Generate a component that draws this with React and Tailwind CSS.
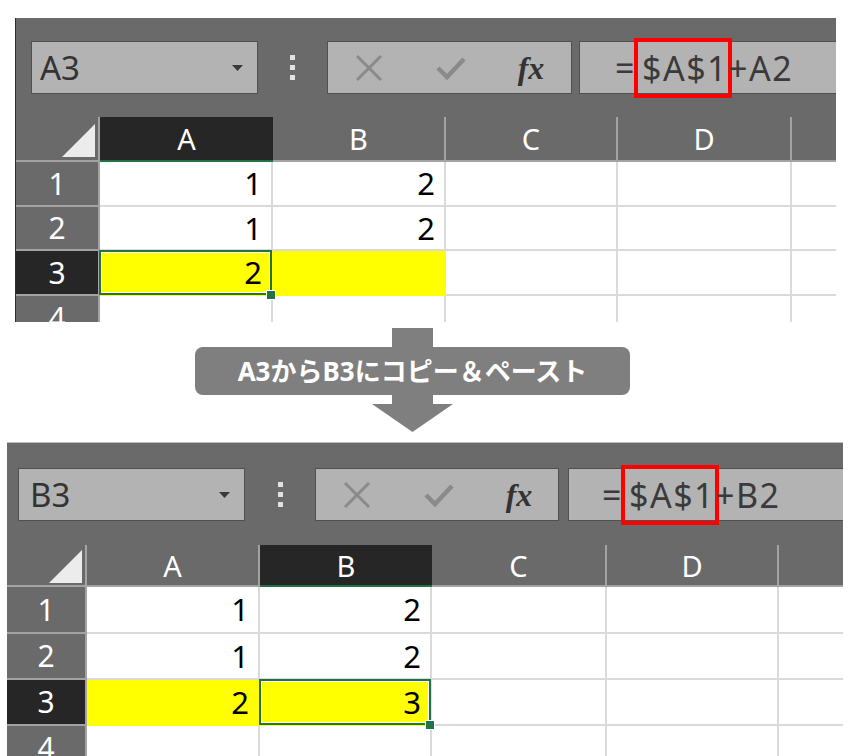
import React from "react";

const sheets = [
  {
    wrap: "ml-[15px] mt-[18px] w-[821px] h-[304px] border-l border-[#2e2e2e]",
    bar: "h-[99px] pt-[23px] pl-[15px]",
    nameBox: "w-[227px] pl-[8px]",
    dots: "w-[69px]",
    cancel: "w-[245px]",
    formulaBox: "ml-[7px] pl-[35px]",
    corner: "w-[84px]",
    tri: "pr-[3px] pb-[3px]",
    cols: ["w-[173px]", "w-[173px]", "w-[172px]", "w-[174px]"],
    headH: "h-[45px]",
    rowH: ["h-[45px]", "h-[44px]", "h-[45px]", "h-[45px]"],
    name: "A3",
    other: "A2",
    selCol: 0,
    data: [["1", "2"], ["1", "2"], ["2", ""]],
  },
  {
    wrap: "ml-[7px] mt-[10px] w-[836px] h-[314px] border-t border-[#bdbdbd]",
    bar: "h-[102px] pt-[25px] pl-[11px]",
    nameBox: "w-[227px] pl-[11px]",
    dots: "w-[70px]",
    cancel: "w-[244px]",
    formulaBox: "ml-[9px] pl-[33px]",
    corner: "w-[80px]",
    tri: "pr-[3px] pb-[2px]",
    cols: ["w-[173px]", "w-[172px]", "w-[175px]", "w-[172px]"],
    headH: "h-[42px]",
    rowH: ["h-[47px]", "h-[46px]", "h-[46px]", "h-[46px]"],
    name: "B3",
    other: "B2",
    selCol: 1,
    data: [["1", "2"], ["1", "2"], ["2", "3"]],
  },
];

const letters = ["A", "B", "C", "D", "E"];

function Selection() {
  return (
    <div className="absolute -left-px -top-px -right-px -bottom-px border-2 border-[#217346] shadow-[inset_0_0_0_1px_#ffffff] z-10">
      <div className="absolute -right-[6px] -bottom-[7px] w-[10px] h-[10px] bg-[#217346] border border-white" />
    </div>
  );
}

function Sheet({ s }) {
  return (
    <div className={`${s.wrap} bg-[#6a6a6a] overflow-hidden font-['Noto_Sans',sans-serif]`}>
      {/* formula bar */}
      <div className={`${s.bar} flex items-start`}>
        <div className={`${s.nameBox} h-[53px] bg-[#b3b3b3] border border-[#505050] flex items-center justify-between pr-[14px] text-[33px] text-[#333] leading-none`}>
          <span>{s.name}</span>
          <svg width="11" height="6" viewBox="0 0 11 6">
            <path d="M0 0h11L5.5 6z" fill="#3a3a3a" />
          </svg>
        </div>
        <div className={`${s.dots} h-[53px] flex flex-col items-center justify-center gap-[5px]`}>
          <span className="w-[5px] h-[5px] bg-[#e2e2e2]" />
          <span className="w-[5px] h-[5px] bg-[#e2e2e2]" />
          <span className="w-[5px] h-[5px] bg-[#e2e2e2]" />
        </div>
        <div className={`${s.cancel} h-[53px] bg-[#b3b3b3] border border-[#505050] flex items-center`}>
          <div className="w-[82px] flex justify-center">
            <svg width="28" height="28" viewBox="0 0 28 28">
              <path d="M2 2L26 26M26 2L2 26" stroke="#8a8a8a" strokeWidth="3" />
            </svg>
          </div>
          <div className="w-[82px] flex justify-center">
            <svg width="30" height="24" viewBox="0 0 30 24">
              <path d="M2 12L11 21L28 3" stroke="#8a8a8a" strokeWidth="4.5" fill="none" />
            </svg>
          </div>
          <div className="w-[78px] flex justify-center">
            <span className="font-['Liberation_Serif',serif] italic font-bold text-[32px] text-[#333] leading-none">fx</span>
          </div>
        </div>
        <div className={`${s.formulaBox} flex-1 h-[53px] bg-[#b3b3b3] border border-r-0 border-[#505050] flex items-center text-[34px] text-[#3a3a3a] leading-none tracking-[1.5px]`}>
          <span>=</span>
          <span className="h-[60px] border-4 border-[#ff0000] flex items-center pl-[4px] pr-0 -ml-[2px] mr-[-4px]">$A$1</span>
          <span>+{s.other}</span>
        </div>
      </div>

      {/* column headers */}
      <div className={`${s.headH} flex text-[29px] text-white leading-none`}>
        <div className={`${s.corner} h-full border-r-2 border-b-2 border-[#a3a3a3] flex items-end justify-end ${s.tri}`}>
          <svg width="33" height="33" viewBox="0 0 33 33">
            <path d="M33 0V33H0z" fill="#ececec" />
          </svg>
        </div>
        {s.cols.map((w, i) =>
          i === s.selCol ? (
            <div key={i} className={`${w} h-full bg-[#262626] border-b-2 border-[#217346] flex items-center justify-center`}>
              {letters[i]}
            </div>
          ) : (
            <div key={i} className={`${w} h-full border-r-2 border-b-2 border-[#a3a3a3] flex items-center justify-center`}>
              {letters[i]}
            </div>
          )
        )}
        <div className="flex-1 h-full border-b-2 border-[#a3a3a3]" />
      </div>

      {/* rows */}
      {s.rowH.map((h, r) => (
        <div key={r} className={`${h} flex leading-none`}>
          <div
            className={`${s.corner} h-full border-r-2 border-b-2 border-[#a3a3a3] flex items-center justify-center text-[30px] text-white ${
              r === 2 ? "bg-[#262626]" : ""
            }`}
          >
            {r + 1}
          </div>
          {s.cols.map((w, c) => {
            const val = s.data[r] ? s.data[r][c] : "";
            const yellow = r === 2 && c < 2;
            return (
              <div
                key={c}
                className={`${w} h-full relative border-r-2 border-b-2 border-[#dadada] flex items-center justify-end pr-[9px] text-[31px] text-black ${
                  yellow ? "bg-[#ffff00] border-[#ffff00]" : "bg-white"
                }`}
              >
                {val}
                {r === 2 && c === s.selCol && <Selection />}
              </div>
            );
          })}
          <div className="flex-1 h-full bg-white border-b-2 border-[#dadada]" />
        </div>
      ))}
    </div>
  );
}

function Arrow() {
  return (
    <div className="w-[825px] flex flex-col items-center mt-[6px]">
      <div className="w-[41px] h-[19px] bg-[#7f7f7f]" />
      <div className="w-[435px] h-[48px] bg-[#7f7f7f] rounded-[8px] flex items-center justify-center text-white text-[26px] font-bold leading-none font-['Noto_Sans','Noto_Sans_CJK_JP',sans-serif]">
        A3からB3にコピー＆ペースト
      </div>
      <div className="w-[41px] h-[9px] bg-[#7f7f7f]" />
      <svg width="81" height="28" viewBox="0 0 81 28">
        <path d="M0 0H81L40.5 28z" fill="#7f7f7f" />
      </svg>
    </div>
  );
}

export default function App() {
  return (
    <div className="w-[851px] h-[756px] bg-white overflow-hidden">
      <Sheet s={sheets[0]} />
      <Arrow />
      <Sheet s={sheets[1]} />
    </div>
  );
}
